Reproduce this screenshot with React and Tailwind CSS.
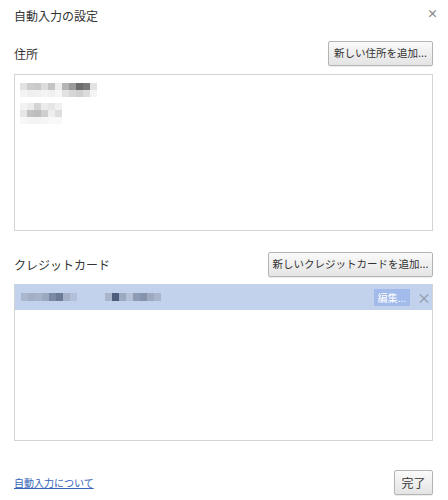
import React from 'react';

const font = { fontFamily: '"Noto Sans CJK JP", "Noto Sans", sans-serif' };

// pixelated (blurred) personal data
const Mosaic = ({ rows, size = 7, h = 7 }) => (
    <div className="flex flex-col">
        {rows.map((row, i) => (
            <div key={i} className="flex">
                {row.map((c, j) => (
                    <div key={j} style={{ width: size, height: h, background: c }} />
                ))}
            </div>
        ))}
    </div>
);

const addr1 = [
    ['#e2e2e2', '#cdcdcd', '#cacaca', '#dcdcdc', '#c4c4c4', '#ededed', '#b4b4b4', '#9a9a9a', '#6c6c6c', '#7a7a7a', '#e2e2e2'],
    ['#f3f3f3', '#efefef', '#f1f1f1', '#f4f4f4', '#f0f0f0', '#f6f6f6', '#e2e2e2', '#d6d6d6', '#cfcfcf', '#dcdcdc', '#f4f4f4'],
];
const addr2 = [
    ['#f2f2f2', '#ececec', '#d4d4d4', '#ececec', '#e6e6e6', '#f0f0f0', '#ffffff'],
    ['#e6e6e6', '#c2c2c2', '#bdbdbd', '#cfcfcf', '#eeeeee', '#dedede', '#ffffff'],
    ['#f7f7f7', '#f4f4f4', '#f3f3f3', '#f6f6f6', '#f8f8f8', '#f8f8f8', '#ffffff'],
];
const card1 = [
    ['#a9b6cc', '#a2afc6', '#a5b2c8', '#9aa8c0', '#7b89a4', '#6c7a96', '#a4b1c8', '#b2bfd6'],
];
const card2 = [
    ['#a8b5cb', '#4f5d7c', '#9ba9c1', '#b4c1d7', '#8e9bb4', '#8593ad', '#9ca9c1', '#a8b5cc'],
];

const Button = ({ children, className = '' }) => (
    <button
        className={`h-[25px] rounded-[2px] border border-[#b4b4b4] bg-gradient-to-b from-[#fafafa] to-[#e4e4e4] text-[#333] shadow-[0_1px_1px_rgba(0,0,0,0.08)] leading-none whitespace-nowrap flex items-center justify-center ${className}`}
        style={font}>
        {children}
    </button>
);

const App = () => {
    return (
        <div className="w-[448px] h-[500px] bg-white text-[#333] overflow-hidden" style={font}>
            {/* header */}
            <div className="flex justify-between items-start h-[30px] pt-[8px] pl-[14px] pr-[10px]">
                <h1 className="text-[12px] leading-[16px]">自動入力の設定</h1>
                <span className="text-[11px] leading-[10px] text-[#888] font-bold">×</span>
            </div>

            <div className="pl-[14px] pr-[15px]">
                {/* addresses */}
                <div className="flex justify-between items-center mt-[11px]">
                    <h2 className="text-[12px]">住所</h2>
                    <Button className="w-[105px] text-[10.5px]">新しい住所を追加...</Button>
                </div>
                <div className="mt-[8px] h-[157px] border border-[#d4d4d4] pt-[8px] pl-[5px]">
                    <Mosaic rows={addr1} />
                    <div className="mt-[6px]">
                        <Mosaic rows={addr2} />
                    </div>
                </div>

                {/* credit cards */}
                <div className="flex justify-between items-center mt-[21px]">
                    <h2 className="text-[12px]">クレジットカード</h2>
                    <Button className="w-[165px] text-[10.5px]">新しいクレジットカードを追加...</Button>
                </div>
                <div className="mt-[7px] h-[157px] border border-[#d4d4d4] border-t-0">
                    <div className="h-[26px] bg-[#c2d2ec] flex items-center pl-[6px] pr-[5px]">
                        <Mosaic rows={card1} size={7} h={8} />
                        <div className="ml-[28px]">
                            <Mosaic rows={card2} size={7} h={8} />
                        </div>
                        <div className="ml-auto w-[36px] h-[17px] bg-[#a3bbeb] flex items-center justify-center text-[10px] text-white">
                            <span className="blur-[0.6px]">編集...</span>
                        </div>
                        <span className="ml-[7px] w-[10px] text-[14px] text-[#8a94a6] leading-none">×</span>
                    </div>
                </div>

                {/* footer */}
                <div className="flex justify-between items-center mt-[29px]">
                    <a href="#" className="text-[10px] text-[#3563b8] underline">自動入力について</a>
                    <Button className="w-[39px] h-[24px] text-[12px]">完了</Button>
                </div>
            </div>
        </div>
    );
};

export default App;
